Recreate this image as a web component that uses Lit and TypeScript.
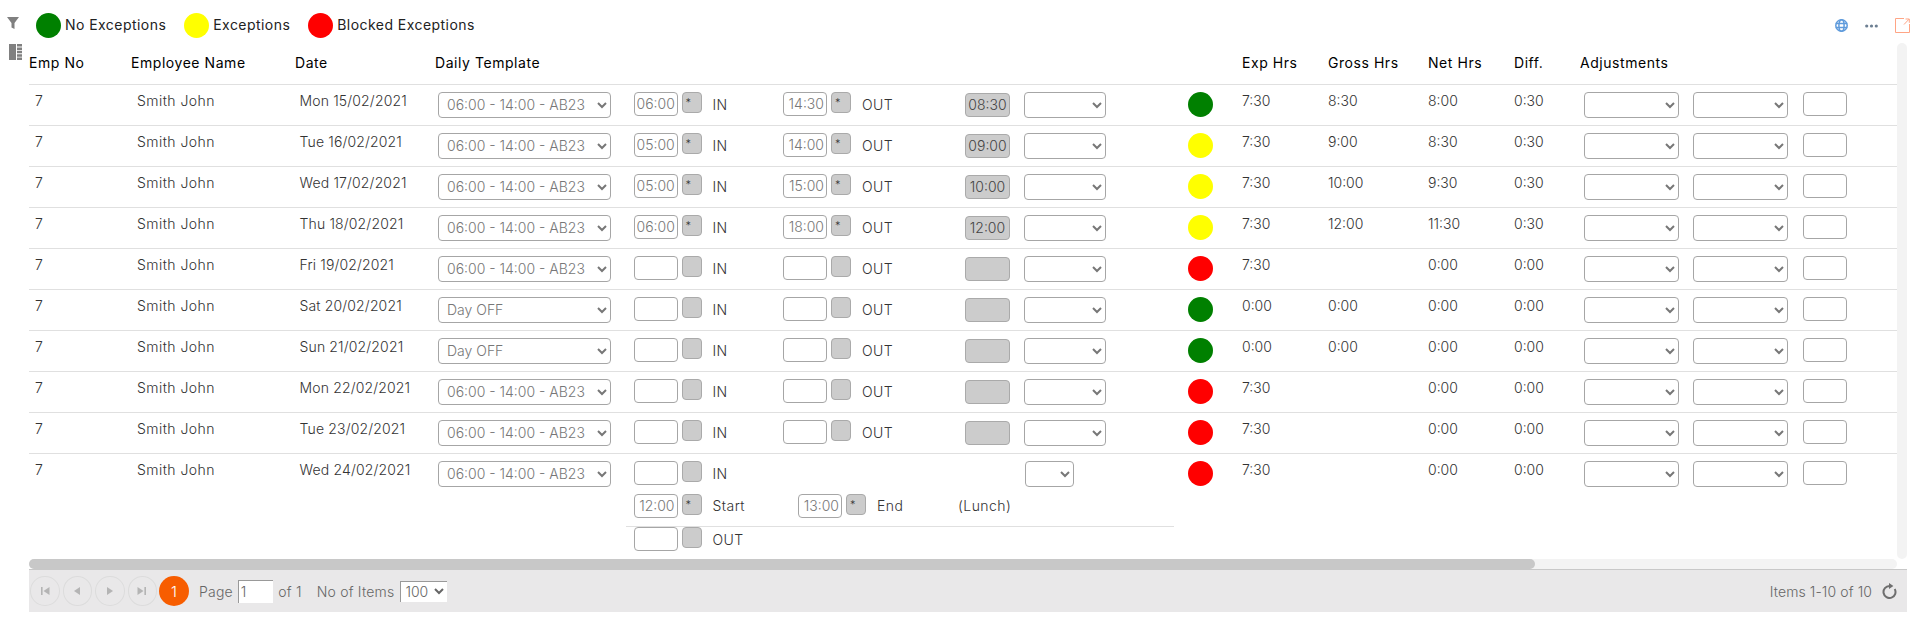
import { LitElement, html, css } from "lit";
import { customElement } from "lit/decorators.js";

type Row = { date: string; tpl: string; inT?: string; outT?: string; total?: string; st: string; exp: string; gross: string; net: string; diff: string; lunch?: boolean };
const T = "06:00 - 14:00 - AB23";
const rows: Row[] = [
  { date: "Mon 15/02/2021", tpl: T, inT: "06:00", outT: "14:30", total: "08:30", st: "green", exp: "7:30", gross: "8:30", net: "8:00", diff: "0:30" },
  { date: "Tue 16/02/2021", tpl: T, inT: "05:00", outT: "14:00", total: "09:00", st: "yellow", exp: "7:30", gross: "9:00", net: "8:30", diff: "0:30" },
  { date: "Wed 17/02/2021", tpl: T, inT: "05:00", outT: "15:00", total: "10:00", st: "yellow", exp: "7:30", gross: "10:00", net: "9:30", diff: "0:30" },
  { date: "Thu 18/02/2021", tpl: T, inT: "06:00", outT: "18:00", total: "12:00", st: "yellow", exp: "7:30", gross: "12:00", net: "11:30", diff: "0:30" },
  { date: "Fri 19/02/2021", tpl: T, st: "red", exp: "7:30", gross: "", net: "0:00", diff: "0:00" },
  { date: "Sat 20/02/2021", tpl: "Day OFF", st: "green", exp: "0:00", gross: "0:00", net: "0:00", diff: "0:00" },
  { date: "Sun 21/02/2021", tpl: "Day OFF", st: "green", exp: "0:00", gross: "0:00", net: "0:00", diff: "0:00" },
  { date: "Mon 22/02/2021", tpl: T, st: "red", exp: "7:30", gross: "", net: "0:00", diff: "0:00" },
  { date: "Tue 23/02/2021", tpl: T, st: "red", exp: "7:30", gross: "", net: "0:00", diff: "0:00" },
  { date: "Wed 24/02/2021", tpl: T, st: "red", exp: "7:30", gross: "", net: "0:00", diff: "0:00", lunch: true },
];

@customElement("app-root")
export class AppRoot extends LitElement {
  static styles = css`
    :host { display: block; width: 1915px; height: 619px; overflow: hidden; background: #fff;
      font-family: "Inter", "Liberation Sans", sans-serif; font-size: 14px; color: #333; }
    * { box-sizing: border-box; }
    .page { display: flex; }
    .rail { width: 29px; flex: none; padding: 17px 0 0 7px; display: flex; flex-direction: column; gap: 15px; }
    .rail svg { display: block; }
    .rail .cols { margin-left: 2px; }
    .main { width: 1886px; flex: none; padding-top: 13px; }
    .toolbar { height: 25px; margin-bottom: 5px; display: flex; align-items: center; padding: 0 5px 0 7px; }
    .legend { display: flex; gap: 18px; letter-spacing: .45px; font-size: 14px; color: #222; }
    .lg { display: flex; align-items: center; gap: 4px; }
    .lg span.t { padding-bottom: 3px; }
    .dot { width: 25px; height: 25px; border-radius: 50%; flex: none; }
    .green { background: #008000; } .yellow { background: #ffff00; } .red { background: #ff0000; }
    .tools { margin-left: auto; display: flex; align-items: center; gap: 17px; }
    .tools svg { display: block; }
    .body { display: flex; height: 516px; }
    .table { width: 1868px; flex: none; }
    .vtrack { width: 10px; height: 516px; background: #f3f3f3; border-radius: 5px; }
    .grid { display: grid; grid-template-columns: 97px 164px 140px 196px 548px 68px 86px 100px 86px 66px 317px; }
    .head { height: 42px; border-bottom: 1px solid #e0e0e0; font-size: 14px; font-weight: 400; color: #000; line-height: 17px; padding-top: 11px; letter-spacing: .55px; }
    .head > div { padding-left: 5px; white-space: nowrap; }
    .head .flush { padding-left: 0; }
    .row { height: 41px; border-bottom: 1px solid #e0e0e0; font-size: 14px; line-height: 17px; font-weight: 300; color: #333; padding-top: 7px; }
    .row.last { height: 105px; border-bottom: 0; }
    .id { padding-left: 6px; letter-spacing: .45px; }
    .nm { padding-left: 11px; letter-spacing: .45px; white-space: nowrap; }
    .dt { padding-left: 9.5px; white-space: nowrap; letter-spacing: .15px; }
    .tpl { padding-left: 8px; }
    select { font: inherit; font-size: 14px; font-weight: 300; color: #777; height: 25.5px; background: #fff; border: 1px solid #a6a6a6; border-radius: 4px; padding: 0 0 0 4px; display: block; margin: 0; letter-spacing: 0; }
    .s-tpl { width: 173px; }
    .s-time { width: 82px; }
    .s-small { width: 49px; }
    .s-adj { width: 95px; }
    input { font: inherit; font-size: 14px; font-weight: 300; color: #777; width: 44px; height: 23.5px; border: 1px solid #a6a6a6; border-radius: 4px; padding: 0 2px; text-align: right; background: #fff; display: block; margin: 0; letter-spacing: 0; }
    .star { width: 20px; height: 21px; background: #ccc; border: 1px solid #aaa; border-radius: 4px; font: inherit; font-size: 11px; font-weight: 300; line-height: 11px; color: #333; padding: 2px 0 0 3px; text-align: left; display: block; margin: 0; }
    .time { padding-left: 7.5px; }
    .tline { display: flex; align-items: flex-start; }
    .grp { display: flex; align-items: flex-start; gap: 4px; flex: none; }
    .lbl { margin: 4px 0 0 7px; white-space: nowrap; color: #333; letter-spacing: .45px; }
    .g1 { width: 149.5px; }
    .g2 { width: 182px; }
    .tot { width: 45px; height: 23.5px; margin-top: 1px; background: #ccc; border: 1px solid #aaa; border-radius: 4px; flex: none; text-align: center; line-height: 22px; font-size: 14px; color: #444; }
    .time select { margin-left: 14px; flex: none; }
    .sub2 { height: 33px; border-bottom: 1px solid #e0e0e0; margin-left: -7.5px; padding-left: 7.5px; }
    .sub2 .lbl { margin-top: 3px; }
    .sub1 { height: 33px; }
    .sub1 .g1 { width: 391.5px; }
    .sub1 select { margin-left: 0; }
    .g3 { width: 164.5px; }
    .g4 { width: 153px; }
    .st { padding-left: 14px; }
    .adj { padding-left: 4px; display: flex; align-items: flex-start; gap: 14px; }
    .adj input { margin-left: .5px; }
    .hscroll { height: 10px; width: 1868px; background: #f3f3f3; border-radius: 5px; }
    .thumb { height: 10px; width: 1506px; background: #c8c8c8; border-radius: 5px; }
    .foot { height: 43px; width: 1878px; background: #e9e8e9; border-top: 1px solid #c8c8c8; display: flex; align-items: center; font-size: 14px; font-weight: 300; color: #666; padding: 0 10px 0 1px; letter-spacing: .2px; }
    .pg { width: 29.5px; height: 30px; border-radius: 50%; border: 1px solid #dcdcdc; display: flex; align-items: center; justify-content: center; flex: none; margin-right: 3px; }
    .cur { width: 30px; height: 30px; border-radius: 50%; background: #f75d00; color: #fff; display: flex; align-items: center; justify-content: center; flex: none; margin-left: -1px; font-size: 15px; }
    .foot .pl { margin-left: 10px; }
    .foot input { width: 35.5px; height: 23px; text-align: left; border: 0; border-left: 1px solid #999; border-top: 1px solid #999; border-radius: 0; margin: 0 5px 0 5px; color: #666; }
    .foot select { width: 47px; height: 21px; border: 0; border-left: 1px solid #999; border-top: 1px solid #999; border-radius: 0; margin-left: 6px; padding: 0; color: #666; }
    .foot .noi { margin-left: 15px; }
    .foot .right { margin-left: auto; display: flex; align-items: center; gap: 10px; letter-spacing: .1px; }
  `;

  private time(v?: string) {
    return html`<input type="text" .value=${v ?? ""} />`;
  }
  private star(v?: string) {
    return html`<button class="star">${v ? "*" : ""}</button>`;
  }
  private opt(v = "") {
    return html`<option>${v}</option>`;
  }
  private nav(d: string) {
    return html`<div class="pg"><svg width="12" height="12" viewBox="0 0 12 12"><path d=${d} fill="#b4b4b4"/></svg></div>`;
  }

  private row(r: Row, i: number) {
    const timeCell = r.lunch
      ? html`<div class="time">
          <div class="tline sub1">
            <div class="grp g1">${this.time()}${this.star()}<span class="lbl">IN</span></div>
            <select class="s-small">${this.opt()}</select>
          </div>
          <div class="tline sub2">
            <div class="grp g3">${this.time("12:00")}${this.star("*")}<span class="lbl">Start</span></div>
            <div class="grp g4">${this.time("13:00")}${this.star("*")}<span class="lbl">End</span></div>
            <span class="lbl">(Lunch)</span>
          </div>
          <div class="tline"><div class="grp g1">${this.time()}${this.star()}<span class="lbl">OUT</span></div></div>
        </div>`
      : html`<div class="time tline">
          <div class="grp g1">${this.time(r.inT)}${this.star(r.inT)}<span class="lbl">IN</span></div>
          <div class="grp g2">${this.time(r.outT)}${this.star(r.outT)}<span class="lbl">OUT</span></div>
          <div class="tot">${r.total ?? ""}</div>
          <select class="s-time">${this.opt()}</select>
        </div>`;
    return html`<div class="grid row ${i === rows.length - 1 ? "last" : ""}">
      <div class="id">7</div>
      <div class="nm">Smith John</div>
      <div class="dt">${r.date}</div>
      <div class="tpl"><select class="s-tpl">${this.opt(r.tpl)}</select></div>
      ${timeCell}
      <div class="st"><div class="dot ${r.st}"></div></div>
      <div>${r.exp}</div>
      <div>${r.gross}</div>
      <div>${r.net}</div>
      <div>${r.diff}</div>
      <div class="adj">
        <select class="s-adj">${this.opt()}</select>
        <select class="s-adj">${this.opt()}</select>
        <input type="text" />
      </div>
    </div>`;
  }

  render() {
    return html`<div class="page">
      <div class="rail">
        <svg width="12" height="12" viewBox="0 0 12 12"><path d="M0 0h12L7.5 6v6l-3-1.5V6z" fill="#808080"/></svg>
        <svg class="cols" width="13" height="16" viewBox="0 0 13 16" fill="#808080"><path d="M0 0h7v16H0zM8 0h5v2.5H8zM8 3.4h5v2.5H8zM8 6.8h5v2.5H8zM8 10.2h5v2.5H8zM8 13.5h5V16H8z"/></svg>
      </div>
      <div class="main">
        <div class="toolbar">
          <div class="legend">
            <div class="lg"><span class="dot green"></span><span class="t">No Exceptions</span></div>
            <div class="lg"><span class="dot yellow"></span><span class="t">Exceptions</span></div>
            <div class="lg"><span class="dot red"></span><span class="t">Blocked Exceptions</span></div>
          </div>
          <div class="tools">
            <svg width="13" height="13" viewBox="0 0 13 13" fill="none" stroke="#5f9bdc" stroke-width="1.5"><circle cx="6.5" cy="6.5" r="5.7"/><ellipse cx="6.5" cy="6.5" rx="2.6" ry="5.7"/><path d="M.7 4.6h11.6M.7 8.4h11.6"/></svg>
            <svg width="13" height="4" viewBox="0 0 13 4" fill="#6d7f92"><circle cx="1.7" cy="2" r="1.6"/><circle cx="6.5" cy="2" r="1.6"/><circle cx="11.3" cy="2" r="1.6"/></svg>
            <svg width="15" height="15" viewBox="0 0 15 15" fill="none" stroke="#ffa585" stroke-width="1"><path d="M9 .5H.5v14h14V6"/><path d="M9 6.5 14 1.2M10.5 1h3.8v3.8"/></svg>
          </div>
        </div>
        <div class="body">
          <div class="table">
            <div class="grid head">
              <div class="flush">Emp No</div><div>Employee Name</div><div>Date</div><div>Daily Template</div>
              <div></div><div></div>
              <div class="flush">Exp Hrs</div><div class="flush">Gross Hrs</div><div class="flush">Net Hrs</div><div class="flush">Diff.</div><div class="flush">Adjustments</div>
            </div>
            ${rows.map((r, i) => this.row(r, i))}
          </div>
          <div class="vtrack"></div>
        </div>
        <div class="hscroll"><div class="thumb"></div></div>
        <div class="foot">
          ${this.nav("M2 2h1.6v8H2zM10.5 2v8L4.5 6z")}
          ${this.nav("M9 2v8L3 6z")}
          ${this.nav("M3 2v8l6-4z")}
          ${this.nav("M1.5 2v8l6-4zM8.4 2H10v8H8.4z")}
          <div class="cur">1</div>
          <span class="pl">Page</span><input type="text" .value=${"1"} /><span>of 1</span>
          <span class="noi">No of Items</span>
          <select>${this.opt("100")}</select>
          <div class="right">
            <span>Items 1-10 of 10</span>
            <svg width="15" height="16" viewBox="0 0 15 16" fill="none" stroke="#6e6e6e" stroke-width="2"><path d="M12.7 6A6 6 0 1 1 7.5 3"/><path d="M7 0l4.4 3L7 6z" fill="#6e6e6e" stroke="none"/></svg>
          </div>
        </div>
      </div>
    </div>`;
  }
}
